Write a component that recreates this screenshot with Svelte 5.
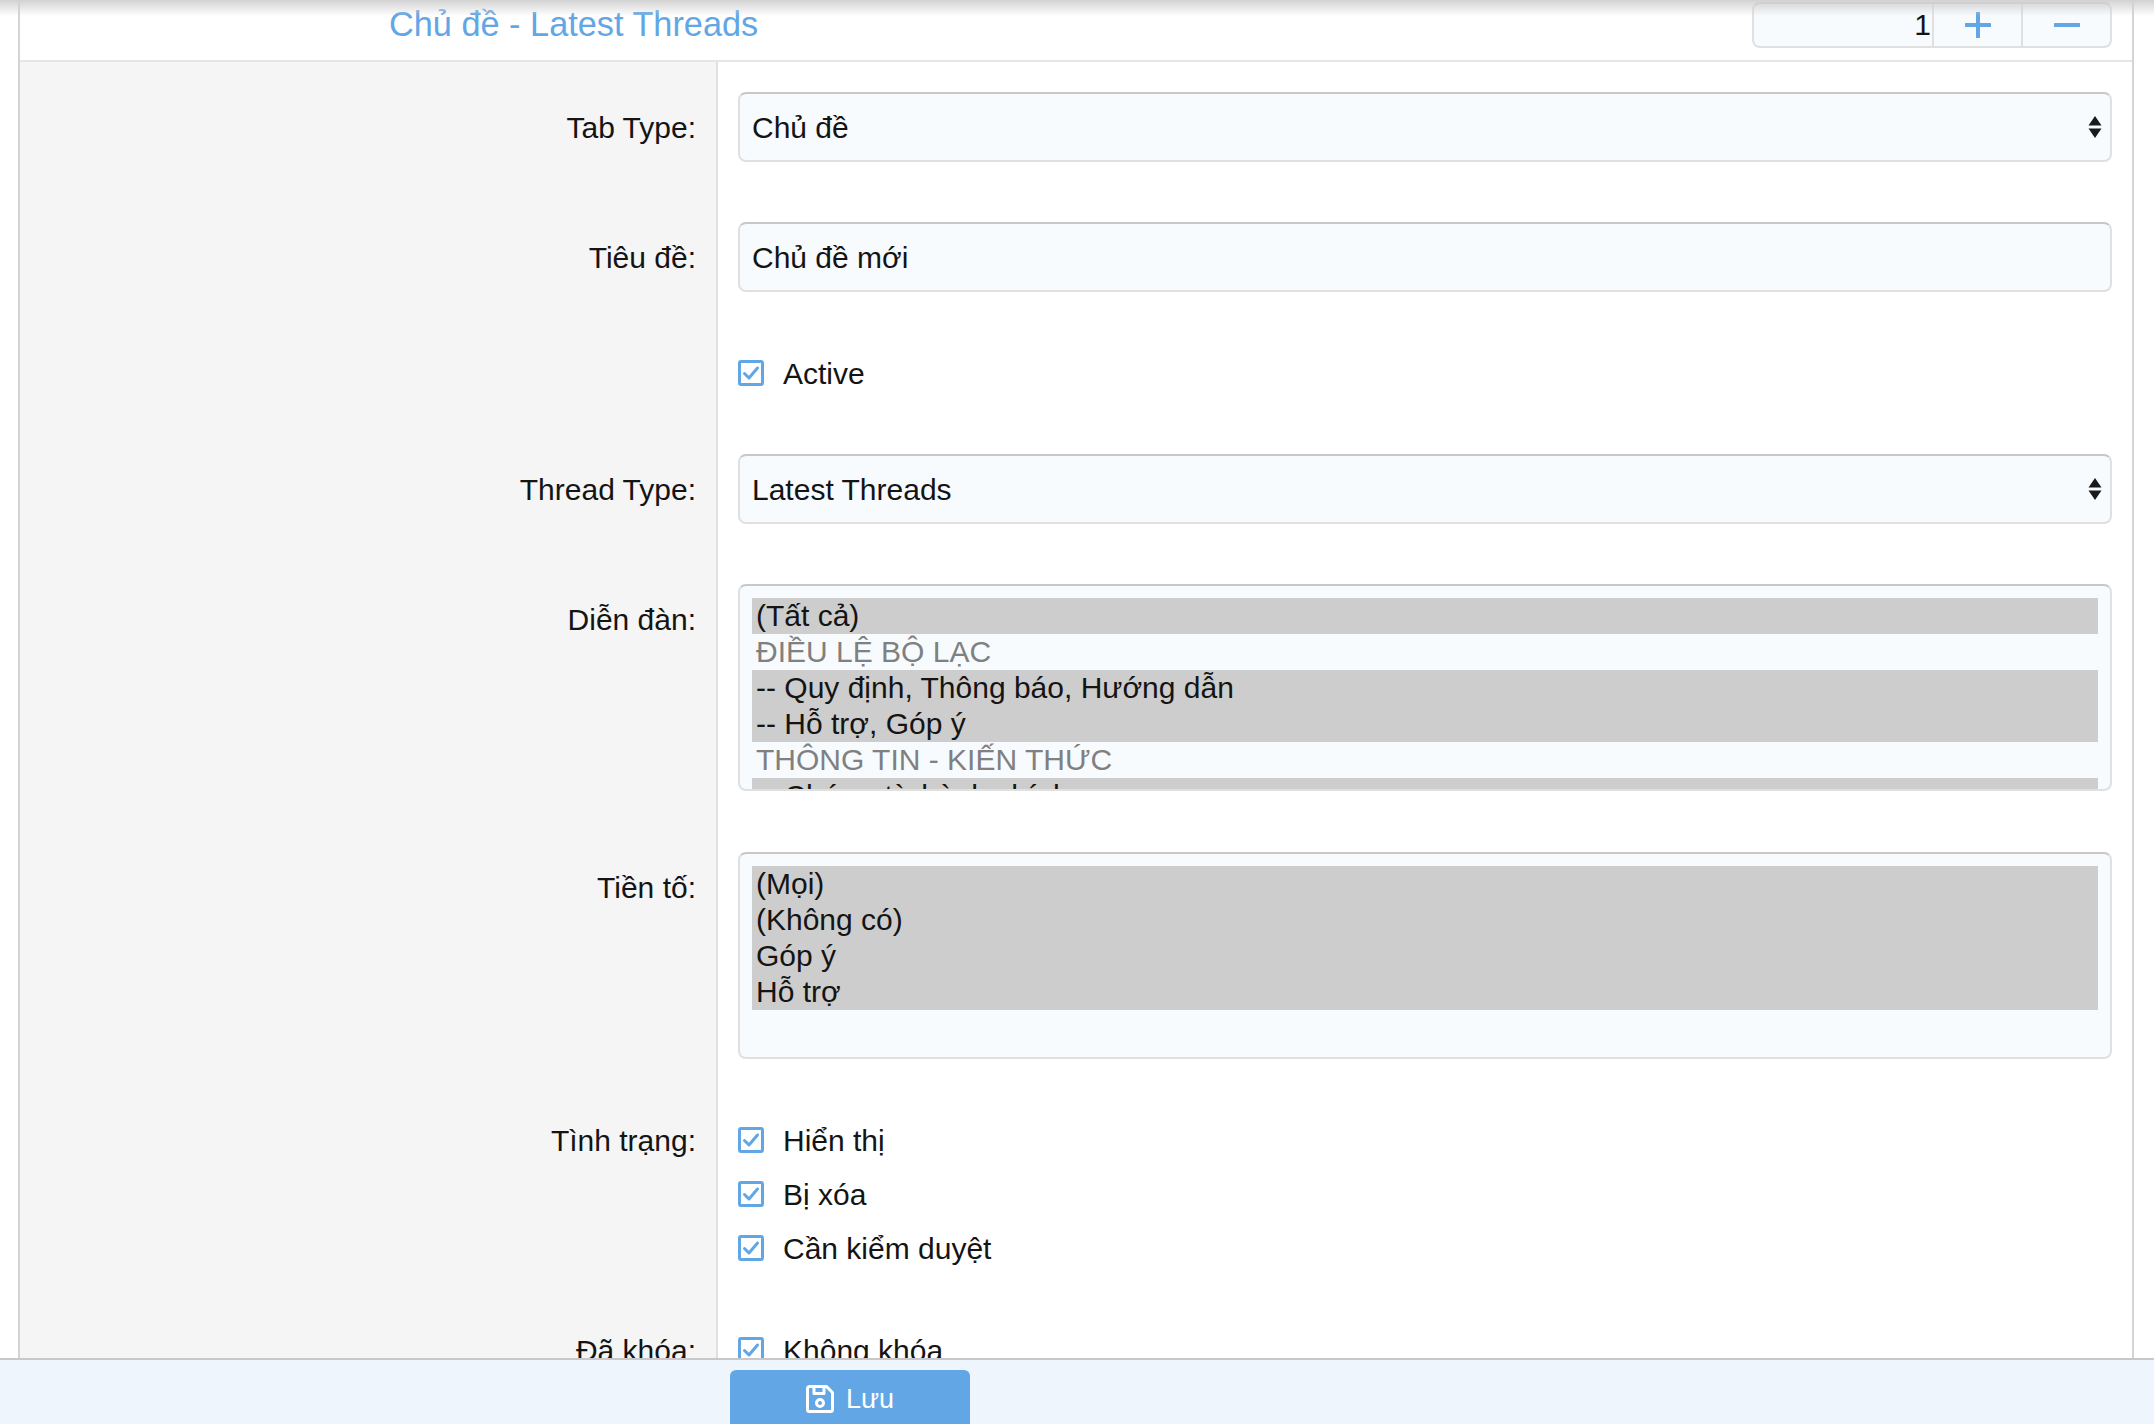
<script>
	let page = $state(1);

	const forums = [
		{ name: "(Tất cả)", selected: true },
		{ name: "ĐIỀU LỆ BỘ LẠC", group: true },
		{ name: "-- Quy định, Thông báo, Hướng dẫn", selected: true },
		{ name: "-- Hỗ trợ, Góp ý", selected: true },
		{ name: "THÔNG TIN - KIẾN THỨC", group: true },
		{ name: "-- Chứng từ hành chính", selected: true }
	];
	const prefixes = ["(Mọi)", "(Không có)", "Góp ý", "Hỗ trợ"];
	const states = ["Hiển thị", "Bị xóa", "Cần kiểm duyệt"];
</script>

{#snippet check(text)}
	<label class="check">
		<span class="box">
			<svg viewBox="0 0 26 26" width="26" height="26">
				<path d="M6.500 13.500l4.500 4.500 8.500-10" fill="none" stroke="#62a6e5" stroke-width="3" stroke-linecap="round" stroke-linejoin="round" />
			</svg>
		</span>
		<span class="check-text">{text}</span>
	</label>
{/snippet}

{#snippet arrows()}
	<svg class="arrows" viewBox="0 0 14 22" width="14" height="22">
		<path d="M7 0l6.500 9.500h-13zM7 22l-6.500-9.500h13z" fill="#1a1a1a" />
	</svg>
{/snippet}

<div class="shell">
	<div class="scroll">
		<main class="panel">
			<header class="head">
				<h2>Chủ đề - Latest Threads</h2>
				<div class="stepper">
					<span class="num">{page}</span>
					<button onclick={() => page++} aria-label="plus">
						<svg viewBox="0 0 26 26" width="26" height="26"><path d="M13 1v24M1 13h24" stroke="#62a6e5" stroke-width="4" stroke-linecap="round" /></svg>
					</button>
					<button onclick={() => page > 1 && page--} aria-label="minus">
						<svg viewBox="0 0 26 26" width="26" height="26"><path d="M1 13h24" stroke="#62a6e5" stroke-width="4" stroke-linecap="round" /></svg>
					</button>
				</div>
			</header>

			<div class="row">
				<div class="key">Tab Type:</div>
				<div class="val">
					<div class="select">Chủ đề {@render arrows()}</div>
				</div>
			</div>
			<div class="row">
				<div class="key">Tiêu đề:</div>
				<div class="val">
					<input class="text" value="Chủ đề mới" />
				</div>
			</div>
			<div class="row checks">
				<div class="key"></div>
				<div class="val">{@render check("Active")}</div>
			</div>
			<div class="row">
				<div class="key">Thread Type:</div>
				<div class="val">
					<div class="select">Latest Threads {@render arrows()}</div>
				</div>
			</div>
			<div class="row lists">
				<div class="key">Diễn đàn:</div>
				<div class="val">
					<div class="list">
						{#each forums as f}
							<div class="opt" class:on={f.selected} class:group={f.group}>{f.name}</div>
						{/each}
					</div>
				</div>
			</div>
			<div class="row lists">
				<div class="key">Tiền tố:</div>
				<div class="val">
					<div class="list">
						{#each prefixes as p}
							<div class="opt on">{p}</div>
						{/each}
					</div>
				</div>
			</div>
			<div class="row checks">
				<div class="key">Tình trạng:</div>
				<div class="val">
					{#each states as s}
						{@render check(s)}
					{/each}
				</div>
			</div>
			<div class="row checks">
				<div class="key">Đã khóa:</div>
				<div class="val">{@render check("Không khóa")}</div>
			</div>
		</main>
	</div>

	<footer class="foot">
		<button class="save">
			<svg viewBox="0 0 28 28" width="28" height="28" fill="none" stroke="#fff" stroke-width="3" stroke-linejoin="round">
				<path d="M3.500 1.500h17l6 6v17a2 2 0 0 1-2 2h-21a2 2 0 0 1-2-2v-21a2 2 0 0 1 2-2z" />
				<path d="M8 1.500v7h10v-7" />
				<circle cx="14" cy="18" r="3.500" />
			</svg>
			Lưu
		</button>
	</footer>

	<div class="shade"></div>
</div>

<style>
	:global(body) {
		background: #fff;
		font-family: "Liberation Sans", Arial, sans-serif;
		color: #141414;
	}
	.shell {
		height: 1424px;
		display: flex;
		flex-direction: column;
		position: relative;
		overflow: hidden;
	}
	.scroll {
		flex: 1;
		min-height: 0;
		overflow: hidden;
		padding: 0 20px 0 18px;
	}
	.panel {
		border-left: 2px solid #d4d4d4;
		border-right: 2px solid #d4d4d4;
		font-size: 30px;
	}
	.head {
		height: 62px;
		box-sizing: border-box;
		border-bottom: 2px solid #e6e6e6;
		display: flex;
		align-items: flex-start;
		justify-content: space-between;
		padding: 2px 20px 0 369px;
	}
	h2 {
		margin: 0;
		font-size: 34.300px;
		font-weight: normal;
		line-height: 44px;
		color: #62a6e5;
	}
	.stepper {
		width: 360px;
		height: 46px;
		box-sizing: border-box;
		display: flex;
		background: #f7fbfe;
		border: 2px solid #e0e0e0;
		border-top-color: #c4c4c4;
		border-radius: 8px;
	}
	.num {
		flex: 1;
		text-align: right;
		line-height: 42px;
		padding-right: 1px;
	}
	.stepper button {
		width: 89px;
		padding: 0;
		display: flex;
		align-items: center;
		justify-content: center;
		background: none;
		border: 0;
		border-left: 2px solid #e0e0e0;
	}
	.row {
		display: grid;
		grid-template-columns: 698px 1fr;
	}
	.key {
		background: #f5f5f5;
		border-right: 2px solid #e0e0e0;
		text-align: right;
		padding: 31px 20px 29px 0;
		line-height: 70px;
	}
	.val {
		padding: 30px 20px 30px 20px;
		min-width: 0;
	}
	.lists .val {
		padding-bottom: 31px;
	}
	.lists + .lists .val {
		padding-bottom: 30px;
	}
	.checks .key {
		padding-top: 25px;
		padding-bottom: 23px;
		line-height: 54px;
	}
	.checks .val {
		padding-top: 24px;
		padding-bottom: 24px;
	}
	.select,
	.text,
	.list {
		display: block;
		box-sizing: border-box;
		width: 100%;
		background: #f7fbfe;
		border: 2px solid #e0e0e0;
		border-top-color: #c8c8c8;
		border-radius: 8px;
		font: inherit;
		color: inherit;
	}
	.select,
	.text {
		height: 70px;
		line-height: 66px;
		padding: 1px 12px 0;
		outline: none;
	}
	.select {
		position: relative;
	}
	.arrows {
		position: absolute;
		right: 8px;
		top: 22px;
	}
	.list {
		height: 207px;
		padding: 12px 12px 0;
		overflow: hidden;
		line-height: 36px;
	}
	.opt {
		height: 36px;
		padding-left: 4px;
		white-space: nowrap;
	}
	.opt.on {
		background: #cdcdcd;
	}
	.opt.group {
		color: #808080;
	}
	.check {
		display: flex;
		align-items: center;
		height: 54px;
	}
	.check-text {
		padding-top: 2px;
	}
	.box {
		width: 26px;
		height: 26px;
		box-sizing: border-box;
		border: 3px solid #62a6e5;
		border-radius: 3px;
		margin-right: 19px;
		display: flex;
		align-items: center;
		justify-content: center;
		overflow: hidden;
	}
	.box svg {
		flex: none;
	}
	.foot {
		height: 66px;
		flex: none;
		background: #eef5fc;
		border-top: 2px solid #c8c8c8;
		box-sizing: border-box;
		padding: 10px 0 0 730px;
		position: relative;
	}
	.save {
		width: 240px;
		height: 70px;
		background: #62a6e5;
		border: 0;
		border-radius: 6px;
		color: #fff;
		font: inherit;
		font-size: 27px;
		display: flex;
		align-items: flex-start;
		justify-content: center;
		gap: 12px;
		padding: 15px 0 0;
		line-height: 28px;
	}
	.shade {
		position: absolute;
		left: 0;
		right: 0;
		top: 0;
		height: 16px;
		background: linear-gradient(#d2d2d2, rgba(255, 255, 255, 0));
		pointer-events: none;
	}
</style>
